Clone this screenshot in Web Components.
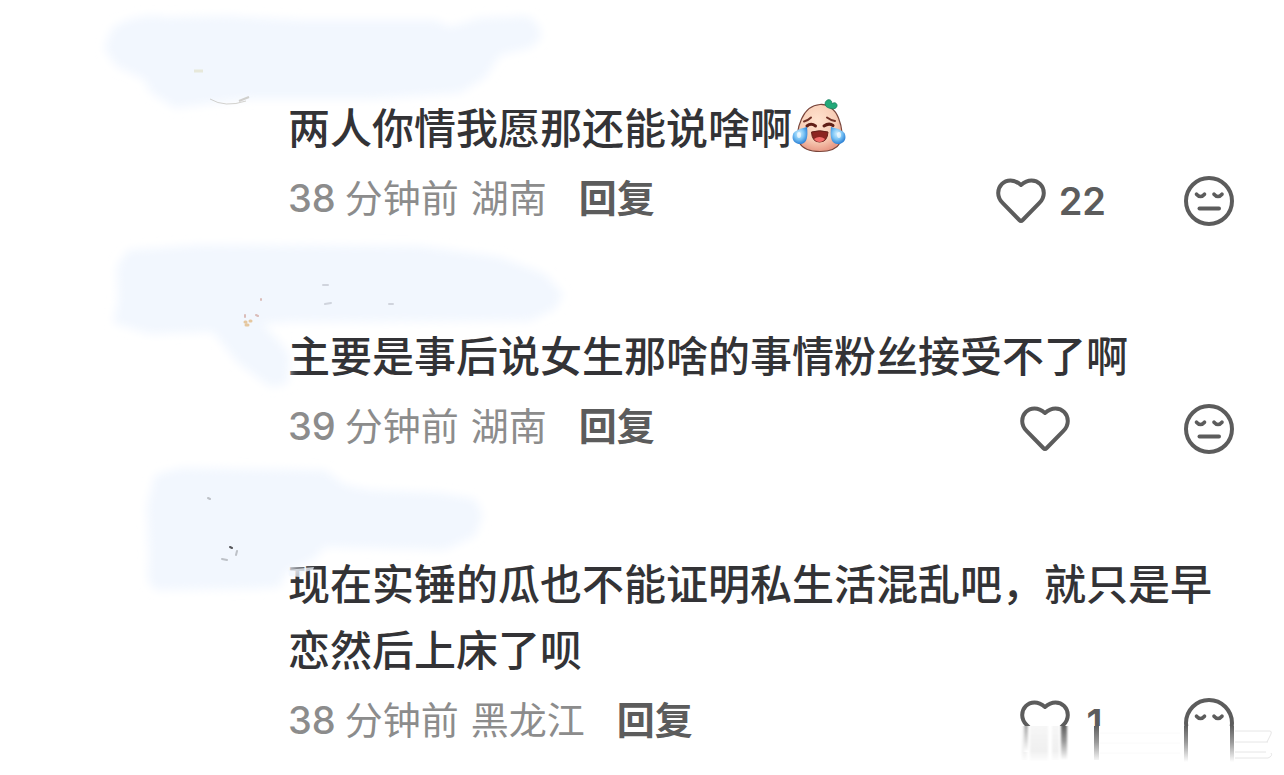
<!DOCTYPE html>
<html lang="zh-CN">
<head>
<meta charset="utf-8">
<meta name="viewport" content="width=device-width, initial-scale=1">
<title>评论</title>
<style>
  body { margin: 0; background: #fff; font-family: Inter, "Noto Sans CJK SC", sans-serif; }
</style>
</head>
<body>
<comment-list>
  <comment-item time="38" place="湖南" likes="22">
    <brush-mark slot="author" shape="wide"></brush-mark>
    两人你情我愿那还能说啥啊<melon-emoji></melon-emoji>
  </comment-item>
  <comment-item time="39" place="湖南">
    <brush-mark slot="author" shape="tail"></brush-mark>
    主要是事后说女生那啥的事情粉丝接受不了啊
  </comment-item>
  <comment-item time="38" place="黑龙江" likes="1">
    <brush-mark slot="author" shape="block"></brush-mark>
    现在实锤的瓜也不能证明私生活混乱吧，就只是早恋然后上床了呗
    <smear-mark slot="cover"></smear-mark>
  </comment-item>
</comment-list>

<script>
class BaseElement extends HTMLElement {
  connectedCallback() {
    if (this.shadowRoot) return;
    this.attachShadow({ mode: 'open' }).innerHTML = this.render();
  }
}

customElements.define('comment-list', class extends BaseElement {
  render() {
    return `<style>
      :host { display: block; padding: 3px 0 16px; }
      main { display: flex; flex-direction: column; }
    </style><main><slot></slot></main>`;
  }
});

customElements.define('heart-icon', class extends BaseElement {
  render() {
    return `<style>
      :host { display: block; width: 50px; height: 46px; }
      svg { display: block; }
    </style>
    <svg width="50" height="46" viewBox="0 0 50 46" fill="none" stroke="currentColor" stroke-width="4" stroke-linejoin="round" aria-hidden="true">
      <path d="M25 7C21.5 4 18 2.500 14.500 2.500C7.500 2.500 2.200 8 2.200 15C2.200 19 3.800 22.200 6.800 25.200L23.300 42Q25 43.700 26.700 42L43.200 25.200C46.200 22.200 47.800 19 47.800 15C47.800 8 42.500 2.500 35.500 2.500C32 2.500 28.500 4 25 7Z"/>
    </svg>`;
  }
});

customElements.define('face-icon', class extends BaseElement {
  render() {
    return `<style>
      :host { display: block; width: 50px; height: 50px; }
      svg { display: block; }
    </style>
    <svg width="50" height="50" viewBox="0 0 50 50" fill="none" stroke="currentColor" stroke-width="4" stroke-linecap="round" aria-hidden="true">
      <circle cx="25" cy="25" r="23"/>
      <path d="M12.500 18.200Q16.500 22.800 20.500 18.200M30 18.200Q34 22.800 38 18.200" stroke-width="3.600"/>
      <path d="M15.500 32.500H35"/>
    </svg>`;
  }
});

customElements.define('melon-emoji', class extends BaseElement {
  render() {
    return `<style>
      :host { display: inline-block; width: 54px; height: 54px; vertical-align: middle; margin-top: -14px; }
      svg { display: block; }
    </style>
    <svg width="54" height="54" viewBox="0 0 54 54" role="img" aria-label="笑哭">
      <defs>
        <radialGradient id="skin" cx="45%" cy="35%" r="65%">
          <stop offset="0" stop-color="#ffe3cf"/><stop offset=".65" stop-color="#f8cdb6"/><stop offset="1" stop-color="#e89a86"/>
        </radialGradient>
        <radialGradient id="tear" cx="45%" cy="40%" r="60%">
          <stop offset="0" stop-color="#d3f1ff"/><stop offset=".55" stop-color="#79c3f5"/><stop offset="1" stop-color="#2f83d6"/>
        </radialGradient>
      </defs>
      <path d="M28 5.500C36 5 43 10 46.500 19C50 28 51 38 48 44C44.500 50.500 37 52.500 28 52.500C19 52.500 11 50.500 7.500 44C4.500 38 5.500 29 9.500 20C13.500 11 20 6 28 5.500Z" fill="url(#skin)" stroke="#79463c" stroke-width="1.200"/>
      <path d="M37 9C32 8 32 2 36 .8C38.500 .2 40 2 40 5C42 2.500 45.500 4 45 7C44.500 10 40 10.500 37 9Z" fill="#22a979" stroke="#137d5c" stroke-width=".8"/>
      <path d="M12 22.500Q16 21.500 19 18.500M35 18.500Q39 21.500 43 22" fill="none" stroke="#713126" stroke-width="2" stroke-linecap="round"/>
      <path d="M15 27Q19 23.500 23.500 27M32 27Q37 23.500 41 26.500" fill="none" stroke="#612018" stroke-width="3" stroke-linecap="round"/>
      <path d="M19.500 33Q27.500 30.500 36 33Q35.500 43 27.500 43Q20 43 19.500 33Z" fill="#8c2420" stroke="#65201a"/>
      <path d="M22 40Q27.500 36 33 40Q31 43 27.500 43Q24 43 22 40Z" fill="#f36e6b"/>
      <path d="M15 28C16 36 15.500 45 8.500 45C1.500 45-1 39 1.500 34Q5 30 15 28Z" fill="url(#tear)"/>
      <path d="M39 28C38 36 38.500 45 45.500 45C52.500 45 55 39 52.500 34Q49 30 39 28Z" fill="url(#tear)"/>
      <ellipse cx="7" cy="36" rx="2" ry="3" fill="#fff" opacity=".65"/>
      <ellipse cx="47" cy="36" rx="2" ry="3" fill="#fff" opacity=".65"/>
    </svg>`;
  }
});

/* Brush strokes that hide the avatar and the author's name. */
const STROKES = {
  wide: `<path d="M113 27Q140 12 165 17L230 16L300 20L435 20L450 27L480 18L528 16Q542 25 541 38L530 48L500 55L485 78L460 93L370 99L250 99L175 108L150 92L145 80L116 66L104 48Z" filter="url(#soft)"/>
    <g fill="none" stroke="#aaa59c"><path d="M210 99Q225 108 246 101" opacity=".5"/><path d="M239 101L249 97" stroke-width="2" opacity=".5"/><path d="M194 71H203" stroke="#e7e8da" stroke-width="3"/></g>`,
  tail: `<path d="M128 19L200 14L420 15L500 26L545 43L563 63L555 78L530 90L290 91L262 93L278 109L290 124L288 153L270 156L238 132L213 101L150 103L113 92L118 70L117 35Z" filter="url(#soft)"/>
    <g fill="none" stroke-linecap="round"><path d="M245 91H246M250 90H251M246 94H248" stroke="#dca75f" stroke-width="3" opacity=".6"/><path d="M245 84V86M256 84L258 85M261 68V69" stroke="#c9958b" stroke-width="2" opacity=".6"/><path d="M323 54L328 54M325 73L331 72M389 73L393 73" stroke="#b9bdc6" stroke-width="2" opacity=".6"/></g>`,
  block: `<path d="M155 14L180 7L325 9L345 24L370 29L440 32L475 38L483 54L475 75L445 89L325 86L314 98L286 112L280 126L250 128L155 129L148 120L149 93L147 45Z" filter="url(#soft)"/>
    <path d="M288 109L314 106L313 109L304 111L300 116L289 115Z" opacity=".75"/>
    <g fill="none" stroke-linecap="round"><path d="M230 86L232 87" stroke="#55555a" stroke-width="2"/><path d="M237 90L236 94M222 98L227 99M208 37L210 38" stroke="#9a9ca2" stroke-width="2" opacity=".6"/></g>`
};
const SHIFT = { wide: -3, tail: 0, block: 2 };
customElements.define('brush-mark', class extends BaseElement {
  render() {
    const shape = this.getAttribute('shape');
    return `<style>
      :host { display: block; position: absolute; top: 0; left: 0; pointer-events: none; }
      svg { display: block; overflow: visible; }
    </style>
    <svg width="600" height="160" viewBox="0 0 600 160" fill="#f2f7fe" aria-hidden="true">
      <defs><filter id="soft" x="-10%" y="-20%" width="120%" height="140%"><feGaussianBlur stdDeviation="5"/></filter></defs>
      <g transform="translate(0 ${SHIFT[shape]})">${STROKES[shape]}</g>
    </svg>`;
  }
});

/* Smeared strip over the lower half of the action icons. */
customElements.define('smear-mark', class extends BaseElement {
  render() {
    return `<style>
      :host { display: block; position: absolute; right: 0; bottom: -21px; pointer-events: none; }
      svg { display: block; }
    </style>
    <svg width="284" height="48" viewBox="0 0 284 48" aria-hidden="true">
      <defs>
        <linearGradient id="dark" x2="0" y2="1"><stop offset="0" stop-color="#606060"/><stop offset=".45" stop-color="#999"/><stop offset="1" stop-color="#fff"/></linearGradient>
        <linearGradient id="light" x2="0" y2="1"><stop offset="0" stop-color="#f6f6f6"/><stop offset=".7" stop-color="#f0f0f0"/><stop offset="1" stop-color="#fff"/></linearGradient>
        <linearGradient id="mid" x2="0" y2="1"><stop offset="0" stop-color="#aaa"/><stop offset="1" stop-color="#fff"/></linearGradient>
        <filter id="blur" x="-50%" width="200%"><feGaussianBlur stdDeviation="1 0"/></filter>
      </defs>
      <path d="M0 0H284V48H0Z" fill="#fff"/>
      <g filter="url(#blur)">
        <path d="M22 0H27V34H22ZM30 0H48V36H30ZM52 0H59V34H52Z" fill="url(#light)"/>
        <path d="M24 0H28V26H24Z" fill="url(#mid)"/>
        <path d="M61 0H67V34H61Z" fill="url(#dark)"/>
      </g>
      <path d="M94 0H99V34H94ZM184 0H188V36H184ZM230 0H234V36H230Z" fill="url(#dark)"/>
      <g fill="none" stroke="#e6e6e6"><path d="M235 5H270Q272 5 271 8L267 16M235 16H268M235 26H266M235 32H268Q273 30 271 27"/></g>
      <path d="M100 7H180M100 17H180M100 27H180" stroke="#fafafa"/>
    </svg>`;
  }
});

customElements.define('comment-item', class extends BaseElement {
  render() {
    const likes = this.getAttribute('likes') || '';
    return `<style>
      :host { display: block; }
      article { position: relative; padding-left: 288px; }
      header { position: relative; z-index: 1; height: 90px; margin-left: -288px; pointer-events: none; }
      p { margin: 0; padding-right: 72px; font: 500 42px/66px "Noto Sans CJK SC", sans-serif; color: #333336; }
      footer { box-sizing: border-box; display: flex; align-items: center; justify-content: space-between; height: 72px; padding: 4px 50px 0 0; font-size: 38px; line-height: 56px; }
      .meta { display: flex; align-items: baseline; color: #8c8c8c; white-space: nowrap; }
      .actions, .like { display: flex; align-items: center; }
      .time { display: flex; align-items: baseline; gap: 9px; font-weight: 500; }
      .unit, .place { font-family: "Noto Sans CJK SC", sans-serif; font-weight: 400; }
      .place { margin-left: 12px; }
      button { border: 0; padding: 0; background: none; color: #5c5c5c; font: inherit; cursor: pointer; }
      .reply { margin-left: 32px; font-family: "Noto Sans CJK SC", sans-serif; font-weight: 700; }
      .actions { gap: 78px; padding-top: 8px; }
      .like { gap: 13px; }
      .count { min-width: 23px; font-weight: 600; text-align: center; }
    </style>
    <article>
      <header><slot name="author"></slot></header>
      <p><slot></slot></p>
      <footer>
        <div class="meta">
          <span class="time"><span>${this.getAttribute('time')}</span><span class="unit">分钟前</span></span>
          <span class="place">${this.getAttribute('place')}</span>
          <button class="reply" type="button">回复</button>
        </div>
        <div class="actions">
          <button class="like" type="button" aria-label="赞 ${likes}"><heart-icon></heart-icon><span class="count">${likes}</span></button>
          <button type="button" aria-label="不喜欢"><face-icon></face-icon></button>
        </div>
      </footer>
      <slot name="cover"></slot>
    </article>`;
  }
});
</script>
</body>
</html>
